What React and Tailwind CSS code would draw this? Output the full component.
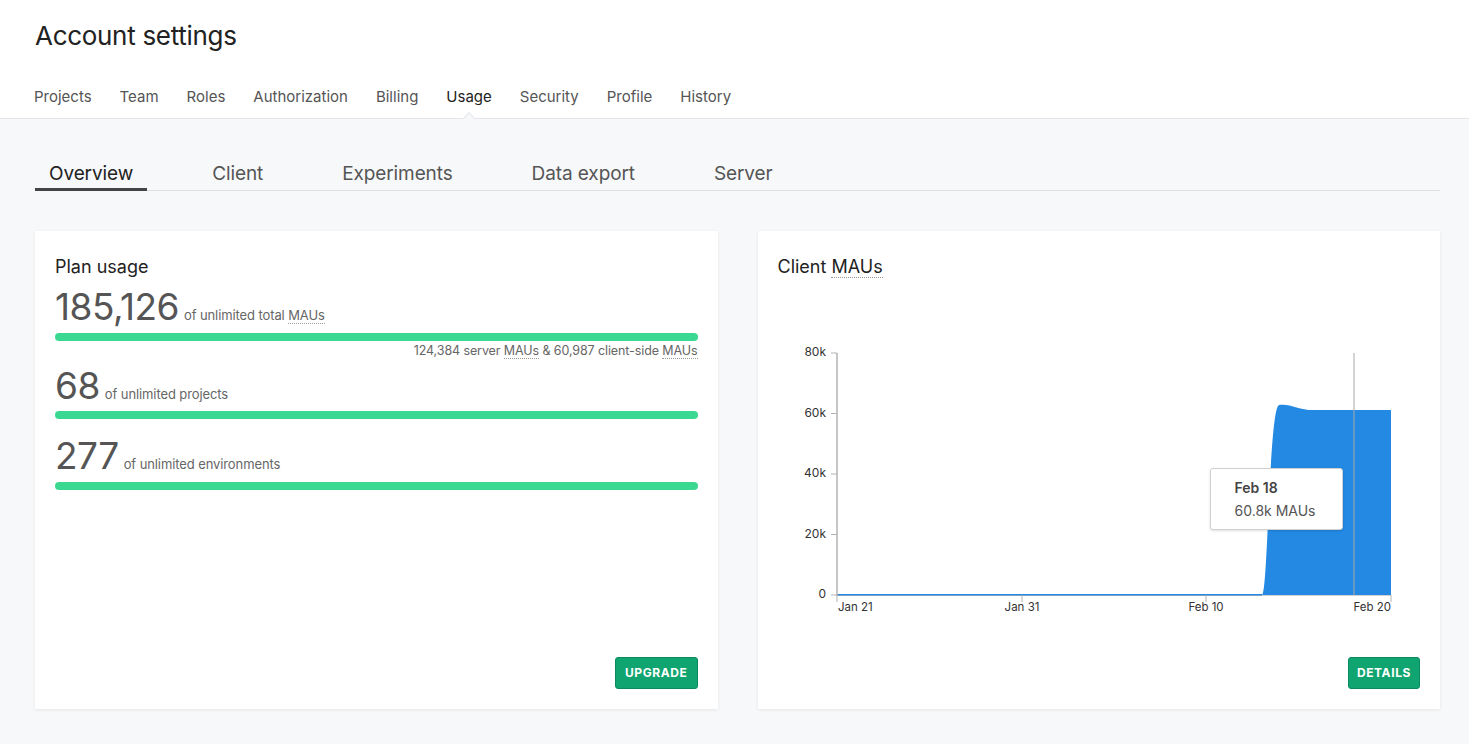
import { useState } from "react";

const topTabs = ["Projects", "Team", "Roles", "Authorization", "Billing", "Usage", "Security", "Profile", "History"];
const subTabs = ["Overview", "Client", "Experiments", "Data export", "Server"];

const Dotted = ({ children }) => (
  <span className="border-b border-dotted border-[#999]">{children}</span>
);

const UsageRow = ({ value, label }) => (
  <div className="flex items-baseline gap-[5px]">
    <span className="text-[37px] leading-[40px] text-[#555] tracking-[-0.5px]">{value}</span>
    <span className="text-[13px] tracking-[-0.1px] text-[#666]">{label}</span>
  </div>
);

const Bar = ({ className = "" }) => (
  <div className={`h-2 w-full rounded-full bg-[#3bd892] ${className}`}></div>
);

const MauChart = () => {
  const yTicks = [
    { label: "80k", y: 13 },
    { label: "60k", y: 73.5 },
    { label: "40k", y: 134 },
    { label: "20k", y: 194.5 },
    { label: "0", y: 255 },
  ];
  const xTicks = [
    { label: "Jan 21", x: 59, anchor: "start" },
    { label: "Jan 31", x: 244, anchor: "middle" },
    { label: "Feb 10", x: 428, anchor: "middle" },
    { label: "Feb 20", x: 613, anchor: "end" },
  ];
  return (
    <div className="relative mt-[61px] h-[280px] w-full">
      <svg width="642" height="280" className="block" style={{ fontFamily: "Inter, sans-serif" }}>
        <path
          d="M59,255 L484,255 C490,255 491,68 501,65 C511,63 521,70 535,70 L613,70 L613,255 Z"
          fill="#2389e3"
        />
        <line x1="59" y1="255" x2="484" y2="255" stroke="#2389e3" strokeWidth="2" />
        <line x1="576" y1="13" x2="576" y2="255" stroke="#a9a9a9" strokeWidth="1" />
        <line x1="59" y1="13" x2="59" y2="256" stroke="#b3b3b3" strokeWidth="1.5" />
        <line x1="59" y1="255.5" x2="613" y2="255.5" stroke="#b3b3b3" strokeWidth="1" opacity="0.6" />
        {yTicks.map((t) => (
          <g key={t.label}>
            <line x1="53" y1={t.y} x2="59" y2={t.y} stroke="#b3b3b3" strokeWidth="1" />
            <text x="48" y={t.y} textAnchor="end" dominantBaseline="middle" fontSize="12" fill="#333">
              {t.label}
            </text>
          </g>
        ))}
        {xTicks.map((t) => (
          <g key={t.label}>
            <line x1={t.x} y1="255" x2={t.x} y2="262" stroke="#b3b3b3" strokeWidth="1" />
            <text x={t.x + (t.anchor === "start" ? 1 : 0)} y="268" textAnchor={t.anchor} dominantBaseline="middle" fontSize="11.5" fill="#333">
              {t.label}
            </text>
          </g>
        ))}
      </svg>
      <div className="absolute left-[432px] top-[128px] flex h-[62px] w-[133px] flex-col justify-center gap-[7px] rounded-[3px] border border-[#d0d0d0] bg-white pl-[24px] text-[14px] shadow-sm">
        <div className="font-semibold leading-4 text-[#444]">Feb 18</div>
        <div className="leading-4 text-[#555]">60.8k MAUs</div>
      </div>
    </div>
  );
};

export default function App() {
  const [active, setActive] = useState("Overview");

  return (
    <div className="min-h-[744px] bg-[#f7f8fa] text-[#222]" style={{ fontFamily: "Inter, 'Liberation Sans', sans-serif" }}>
      <header className="border-b border-[#e3e5e8] bg-white pl-[35px] pt-[20px]">
        <h1 className="text-[26px] leading-[32px] text-[#222] tracking-[-0.3px]">Account settings</h1>
        <nav className="mt-[35px] -ml-px flex gap-[28px]">
          {topTabs.map((t) => (
            <div key={t} className="relative pb-[11px]">
              <span className={`block text-[15px] leading-5 ${t === "Usage" ? "text-[#222]" : "text-[#555]"}`}>{t}</span>
              {t === "Usage" && (
                <div className="absolute bottom-[-5px] left-1/2 h-[9px] w-[9px] -translate-x-1/2 rotate-45 border-l border-t border-[#e3e5e8] bg-[#f7f8fa]"></div>
              )}
            </div>
          ))}
        </nav>
      </header>

      <main className="pl-[35px] pr-[29px] pt-[42px]">
        <div className="flex gap-[51px] border-b border-[#dcdfe3]">
          {subTabs.map((t) => (
            <button
              key={t}
              onClick={() => setActive(t)}
              className={`-mb-px px-[14px] pb-[1px] text-[19px] leading-[26px] tracking-[-0.1px] ${
                active === t ? "border-b-[3px] border-[#444] text-[#222]" : "border-b-[3px] border-transparent text-[#555]"
              }`}
            >
              {t}
            </button>
          ))}
        </div>

        <div className="mt-[40px] grid grid-cols-2 gap-10">
          <section className="flex h-[478px] flex-col bg-white px-5 pb-5 pt-6 shadow-[0_1px_3px_rgba(0,0,0,0.08)]">
            <h2 className="text-[18px] leading-6 text-[#222]">Plan usage</h2>
            <div className="mt-2">
              <UsageRow value="185,126" label={<>of unlimited total <Dotted>MAUs</Dotted></>} />
            </div>
            <Bar className="mt-[6px]" />
            <div className="mt-[2px] text-right text-[12.5px] leading-4 tracking-[-0.1px] text-[#666]">
              124,384 server <Dotted>MAUs</Dotted> &amp; 60,987 client-side <Dotted>MAUs</Dotted>
            </div>
            <div className="mt-[7px]">
              <UsageRow value="68" label="of unlimited projects" />
            </div>
            <Bar className="mt-[5px]" />
            <div className="mt-[17px]">
              <UsageRow value="277" label="of unlimited environments" />
            </div>
            <Bar className="mt-[6px]" />
            <div className="flex-1"></div>
            <div className="flex justify-end">
              <button className="h-8 rounded-[3px] border border-[#0c8a5f] bg-[#10a470] px-[9px] text-[12px] font-bold tracking-[0.6px] text-white">
                UPGRADE
              </button>
            </div>
          </section>

          <section className="flex h-[478px] flex-col bg-white px-5 pb-5 pt-6 shadow-[0_1px_3px_rgba(0,0,0,0.08)]">
            <h2 className="text-[18px] leading-6 text-[#222]">
              Client <Dotted>MAUs</Dotted>
            </h2>
            <MauChart />
            <div className="flex-1"></div>
            <div className="flex justify-end">
              <button className="h-8 rounded-[3px] border border-[#0c8a5f] bg-[#10a470] px-[8px] text-[12px] font-bold tracking-[0.6px] text-white">
                DETAILS
              </button>
            </div>
          </section>
        </div>
      </main>
    </div>
  );
}
